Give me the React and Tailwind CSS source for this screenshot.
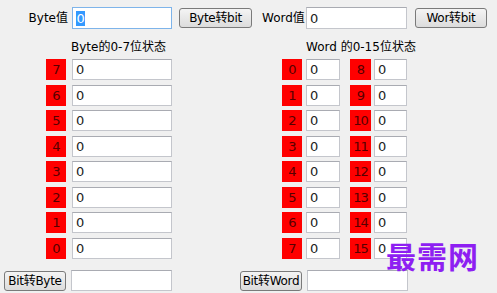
import React from 'react'

const font = { fontFamily: '"DejaVu Sans", "Noto Sans CJK SC", sans-serif' }

function Box({ className = '', children }) {
    return (
        <div className={`h-[21px] shrink-0 bg-white border border-[#c4c6cc] border-t-[#a9abb2] flex items-center pl-[3px] text-[13px] leading-none text-[#222] ${className}`}>
            {children}
        </div>
    )
}

function Btn({ className = '', children }) {
    return (
        <div className={`h-[20px] shrink-0 whitespace-nowrap flex items-center justify-center rounded-[3px] border border-[#7a7a7a] bg-gradient-to-b from-[#f4f4f4] to-[#dcdcdc] text-[12px] leading-none text-black tracking-[-0.3px] ${className}`}>
            {children}
        </div>
    )
}

function Bit({ n, className = '' }) {
    return (
        <div className={`h-[21px] shrink-0 bg-[#ff0000] flex items-center justify-center text-[13px] leading-none text-[#560000] tracking-[-1px] ${className}`}>
            {n}
        </div>
    )
}

export default function App() {
    const byteBits = [7, 6, 5, 4, 3, 2, 1, 0]
    const wordRows = [0, 1, 2, 3, 4, 5, 6, 7]
    return (
        <div className="relative w-[497px] h-[293px] bg-[#f0f0f0] overflow-hidden" style={font}>
            {/* top row */}
            <div className="flex items-center pt-[7px] h-[22px] box-content">
                <div className="w-[68px] shrink-0 text-right text-[12px] whitespace-nowrap">Byte值</div>
                <div className="ml-[4px] w-[100px] h-[22px] shrink-0 bg-white border border-[#7eb4ea] flex items-center pl-[3px] text-[13px] leading-none">
                    <span className="bg-[#3399ff] text-white leading-[15px] px-[0.5px]">0</span>
                </div>
                <Btn className="ml-[7px] w-[73px]">Byte转bit</Btn>
                <div className="ml-[10px] w-[40px] shrink-0 text-[12px] whitespace-nowrap">Word值</div>
                <Box className="ml-[4px] w-[101px] h-[22px]">0</Box>
                <Btn className="ml-[8px] w-[72px]">Wor转bit</Btn>
            </div>

            {/* captions */}
            <div className="flex mt-[11px] text-[12px] h-[14px] items-center whitespace-nowrap">
                <div className="ml-[71px] w-[235px]">Byte的0-7位状态</div>
                <div>Word 的0-15位状态</div>
            </div>

            {/* bits */}
            <div className="flex mt-[5px]">
                <div className="flex flex-col gap-[4.5px] w-[282px]">
                    {byteBits.map(n => (
                        <div key={n} className="flex">
                            <Bit n={n} className="ml-[46px] w-[20px]" />
                            <Box className="ml-[6px] w-[100px]">0</Box>
                        </div>
                    ))}
                </div>
                <div className="flex flex-col gap-[4.5px]">
                    {wordRows.map(n => (
                        <div key={n} className="flex">
                            <Bit n={n} className="w-[20px]" />
                            <Box className="ml-[4px] w-[34px]">0</Box>
                            <Bit n={n + 8} className="ml-[10px] w-[21px]" />
                            <Box className="ml-[3px] w-[33px]">0</Box>
                        </div>
                    ))}
                </div>
            </div>

            {/* bottom row */}
            <div className="flex items-center mt-[11.5px]">
                <Btn className="ml-[4px] w-[62px] h-[19px]">Bit转Byte</Btn>
                <Box className="ml-[5px] w-[101px]"></Box>
                <Btn className="ml-[68px] w-[62px] h-[19px]">Bit转Word</Btn>
                <Box className="ml-[5px] w-[101px]"></Box>
            </div>

            {/* watermark */}
            <div
                className="absolute left-[386px] top-[240px] text-[30px] font-bold text-[#8e1ff2] leading-none tracking-[1px]"
                style={{ fontFamily: '"Noto Sans CJK SC", sans-serif' }}
            >
                最需网
            </div>
        </div>
    )
}
